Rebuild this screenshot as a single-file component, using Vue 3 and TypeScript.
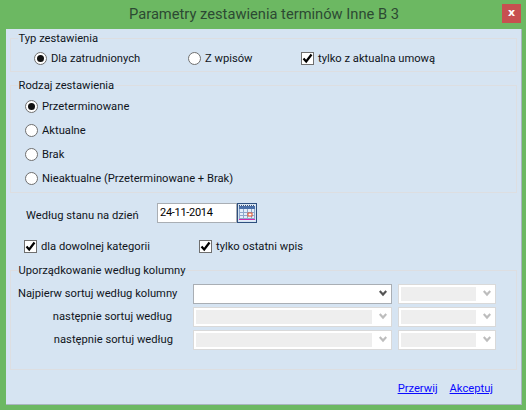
<script setup lang="ts">
const sortRows = [
  { label: 'Najpierw sortuj według kolumny', first: true },
  { label: 'następnie sortuj według', first: false },
  { label: 'następnie sortuj według', first: false },
]
const kinds = [
  { label: 'Przeterminowane', on: true },
  { label: 'Aktualne', on: false },
  { label: 'Brak', on: false },
  { label: 'Nieaktualne (Przeterminowane + Brak)', on: false },
]
</script>

<template>
  <div class="win">
    <header class="titlebar">
      <span class="title">Parametry zestawienia terminów Inne B 3</span>
      <span class="close">x</span>
    </header>
    <main class="body">
      <fieldset class="group">
        <legend>Typ zestawienia</legend>
        <div class="type-in">
          <label class="opt opt-a"><span class="radio on"></span>Dla zatrudnionych</label>
          <label class="opt opt-b"><span class="radio"></span>Z wpisów</label>
          <label class="opt">
            <span class="check"><svg width="11" height="11" viewBox="0 0 11 11"><path d="M1.5 5.5 L4.2 8.5 L9.5 1.5" fill="none" stroke="#000" stroke-width="2.2"/></svg></span>tylko z aktualna umową
          </label>
        </div>
      </fieldset>

      <fieldset class="group kind-group">
        <legend>Rodzaj zestawienia</legend>
        <div class="kind-in">
          <label v-for="k in kinds" :key="k.label" class="opt">
            <span class="radio" :class="{ on: k.on }"></span>{{ k.label }}
          </label>
        </div>
      </fieldset>

      <div class="date-row">
        <span class="date-label">Według stanu na dzień</span>
        <div class="date-input">24-11-2014</div>
        <button class="date-btn" type="button">
          <svg width="18" height="18" viewBox="0 0 18 18">
            <rect x="1" y="1" width="16" height="16" fill="#e4eefa"/>
            <path d="M1 1.5h16" stroke="#3c4f70" stroke-width="1" stroke-dasharray="1 1"/>
            <rect x="1" y="2" width="16" height="3" fill="#4a6fa8"/>
            <path d="M1.5 5v10M5.5 5v10M9.5 5v10M13.5 5v10M16.5 5v10M1 8.5h16M1 11.5h16M1 14.5h16" stroke="#8fa8cc" stroke-width="1"/>
            <rect x="10" y="9" width="4" height="3" fill="#fff" stroke="#e0502a"/>
            <rect x="1" y="15" width="16" height="1" fill="#d42ab0"/>
          </svg>
        </button>
      </div>

      <div class="check-row">
        <label class="opt opt-c">
          <span class="check"><svg width="11" height="11" viewBox="0 0 11 11"><path d="M1.5 5.5 L4.2 8.5 L9.5 1.5" fill="none" stroke="#000" stroke-width="2.2"/></svg></span>dla dowolnej kategorii
        </label>
        <label class="opt">
          <span class="check"><svg width="11" height="11" viewBox="0 0 11 11"><path d="M1.5 5.5 L4.2 8.5 L9.5 1.5" fill="none" stroke="#000" stroke-width="2.2"/></svg></span>tylko ostatni wpis
        </label>
      </div>

      <fieldset class="group sort-group">
        <legend>Uporządkowanie według kolumny</legend>
        <div class="sort-in">
          <div v-for="(r, i) in sortRows" :key="i" class="sort-row">
            <span class="sort-label" :class="{ left: r.first, nudge: i === 1 }">{{ r.label }}</span>
            <div class="combo wide" :class="{ off: !r.first }">
              <span class="combo-fill"></span>
              <svg width="8" height="7" viewBox="0 0 8 7"><path d="M0.7 1 L4 4.6 L7.3 1" fill="none" stroke-width="2.2"/></svg>
            </div>
            <div class="combo narrow off">
              <span class="combo-fill"></span>
              <svg width="8" height="7" viewBox="0 0 8 7"><path d="M0.7 1 L4 4.6 L7.3 1" fill="none" stroke-width="2.2"/></svg>
            </div>
          </div>
        </div>
      </fieldset>

      <footer class="actions">
        <a>Przerwij</a>
        <a>Akceptuj</a>
      </footer>
    </main>
  </div>
</template>

<style>
html, body { margin: 0; }
</style>

<style scoped>
.win {
  width: 526px;
  height: 410px;
  box-sizing: border-box;
  padding: 0 4px 5px 6px;
  background: #6cb862;
  display: flex;
  flex-direction: column;
  font-family: Roboto, "Noto Sans", sans-serif;
  font-size: 11.2px;
  color: #10151c;
  overflow: hidden;
}

.titlebar {
  height: 29px;
  flex: none;
  position: relative;
  display: flex;
  justify-content: center;
  align-items: center;
}

.title {
  font-size: 14.7px;
  color: #2c4a33;
  margin-top: -1px;
}

.close {
  position: absolute;
  right: 1px;
  top: 4px;
  width: 19px;
  height: 19px;
  background: #c75050;
  color: #fff;
  font: bold 11px "DejaVu Sans", sans-serif;
  line-height: 17px;
  text-align: center;
}

.body {
  flex: 1;
  min-height: 0;
  background: #d6e4f2;
  border-right: 1px solid #a9b5bf;
  border-bottom: 1px solid #a9b5bf;
  padding: 2px 4px 0 3.5px;
  display: flex;
  flex-direction: column;
}

.group {
  margin: 0;
  padding: 0;
  border: 1px solid #dddee1;
  min-width: 0;
}

.group legend {
  margin-left: 7px;
  padding: 0 1px;
  line-height: 15px;
}

.opt {
  display: flex;
  align-items: center;
  line-height: 15px;
  white-space: nowrap;
}

.radio {
  width: 13px;
  height: 13px;
  box-sizing: border-box;
  flex: none;
  margin-right: 4px;
  border: 1px solid #6f6f6f;
  border-radius: 50%;
  background: #fff;
  display: flex;
  align-items: center;
  justify-content: center;
}

.radio.on::after {
  content: "";
  width: 7px;
  height: 7px;
  border-radius: 50%;
  background: #111;
}

.check {
  width: 13px;
  height: 13px;
  box-sizing: border-box;
  flex: none;
  margin-right: 4px;
  border: 1px solid #6f6f6f;
  background: #fff;
  display: flex;
  align-items: center;
  justify-content: center;
}

.type-in {
  display: flex;
  padding: 5px 0 5px 23.5px;
}

.opt-a { width: 154px; }
.opt-b { width: 113px; }

.kind-group {
  margin-top: 5.5px;
}

.kind-in {
  padding: 6.5px 0 6px 14.5px;
  display: flex;
  flex-direction: column;
  gap: 9px;
}

.date-row {
  display: flex;
  align-items: center;
  margin-top: 9.5px;
  height: 20px;
  flex: none;
}

.date-label {
  width: 131px;
  padding-left: 16.5px;
  margin-top: 6px;
  flex: none;
}

.date-input {
  width: 80px;
  height: 20px;
  box-sizing: border-box;
  border: 1px solid #a9aeb4;
  background: #fff;
  padding-left: 2px;
  line-height: 17px;
  font-size: 11px;
  letter-spacing: -0.3px;
  color: #000;
}

.date-btn {
  width: 20px;
  height: 20px;
  padding: 0;
  border: 1px solid #2e4f7f;
  background: #d6e4f2;
  display: flex;
  align-items: center;
  justify-content: center;
}

.check-row {
  display: flex;
  margin-top: 16px;
  padding-left: 14.5px;
  flex: none;
}

.opt-c { width: 175px; }

.sort-group {
  margin-top: 9.5px;
  height: 106.5px;
  box-sizing: border-box;
  flex: none;
}

.sort-in {
  padding: 5.5px 0 0 7.5px;
  display: flex;
  flex-direction: column;
  gap: 2.5px;
}

.sort-row {
  display: flex;
  align-items: center;
  height: 20.5px;
}

.sort-label {
  width: 175px;
  flex: none;
  box-sizing: border-box;
  text-align: right;
  padding-right: 20px;
  padding-bottom: 1px;
  white-space: nowrap;
}

.sort-label.left {
  text-align: left;
  padding-right: 0;
}

.sort-label.nudge {
  padding-right: 21px;
}

.combo {
  height: 100%;
  box-sizing: border-box;
  border: 1px solid #a9aeb4;
  background: #fff;
  display: flex;
  align-items: center;
  padding: 1px 4px 1px 1px;
  gap: 6px;
  stroke: #555;
}

.combo svg path {
  stroke: inherit;
}

.combo.wide { width: 199px; margin-right: 6px; }
.combo.narrow { width: 98px; }

.combo-fill { flex: 1; align-self: stretch; }

.combo.off {
  border-color: #d9d9d9;
  stroke: #bdbdbd;
}

.combo.off .combo-fill { background: #eeeeee; margin: 1px; }

.actions {
  display: flex;
  justify-content: flex-end;
  gap: 12px;
  padding: 11.5px 24px 0 0;
  line-height: 15px;
}

.actions a {
  color: #0a0aff;
  text-decoration: underline;
}
</style>
